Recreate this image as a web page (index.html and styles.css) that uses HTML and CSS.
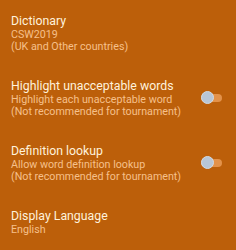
FILE: index.html
```html
<html>
	<head>
		<meta charset="utf-8" />
		<meta name="viewport" content="width=device-width, initial-scale=1">
		<title>Settings</title>
		<link rel="stylesheet" href="styles.css">
	</head>
	<body>
		<div class="prefs">
			<div class="pref">
				<div class="pref-text">
					<div class="pref-title">Dictionary</div>
					<div class="pref-summary">CSW2019<br>(UK and Other countries)</div>
				</div>
			</div>
			<div class="pref">
				<div class="pref-text">
					<div class="pref-title">Highlight unacceptable words</div>
					<div class="pref-summary">Highlight each unacceptable word<br>(Not recommended for tournament)</div>
				</div>
				<span class="switch"><span class="thumb"></span></span>
			</div>
			<div class="pref">
				<div class="pref-text">
					<div class="pref-title">Definition lookup</div>
					<div class="pref-summary">Allow word definition lookup<br>(Not recommended for tournament)</div>
				</div>
				<span class="switch"><span class="thumb"></span></span>
			</div>
			<div class="pref">
				<div class="pref-text">
					<div class="pref-title">Display Language</div>
					<div class="pref-summary">English</div>
				</div>
			</div>
		</div>
	</body>
</html>
```
FILE: styles.css
```css
body {
	margin: 0;
	background: #bc5f0a;
	font-family: Roboto, "Liberation Sans", sans-serif;
}

.pref {
	display: flex;
	align-items: center;
	padding: 13px 14px 12px 11px;
}

.pref-text {
	flex: 1;
}

.pref-title {
	font-size: 12.3px;
	line-height: 16px;
	color: #fff2dc;
}

.pref-summary {
	font-size: 10.7px;
	line-height: 12px;
	color: #f6c08a;
}

.switch {
	position: relative;
	width: 21px;
	height: 8px;
	border-radius: 4px;
	background: #e3924a;
}

.switch .thumb {
	position: absolute;
	left: 0;
	top: -3px;
	width: 13px;
	height: 13px;
	box-sizing: border-box;
	border-radius: 50%;
	background: #b8c6d6;
	border: 1px solid #d2dbe4;
}
```
